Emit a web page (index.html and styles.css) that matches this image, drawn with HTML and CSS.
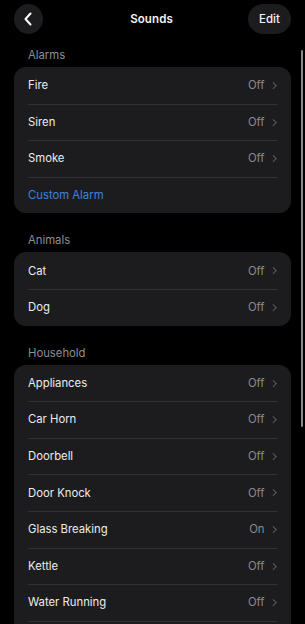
FILE: index.html
```html
<!DOCTYPE html>
<html>
<head>
<meta charset="utf-8">
<link rel="stylesheet" href="styles.css">
</head>
<body>
<div class="screen">
  <header class="nav">
    <button class="circle-btn" aria-label="Back">
      <svg width="10" height="14" viewBox="0 0 10 14"><path d="M7.5 1.5 L2.5 7 L7.5 12.5" fill="none" stroke="#fff" stroke-width="2" stroke-linecap="round" stroke-linejoin="round"/></svg>
    </button>
    <div class="title">Sounds</div>
    <button class="pill-btn">Edit</button>
  </header>

  <section class="group first">
    <div class="group-title">Alarms</div>
    <div class="card">
      <div class="row"><span class="label">Fire</span><span class="value">Off</span><span class="chev"></span></div>
      <div class="row"><span class="label">Siren</span><span class="value">Off</span><span class="chev"></span></div>
      <div class="row"><span class="label">Smoke</span><span class="value">Off</span><span class="chev"></span></div>
      <div class="row"><span class="label link">Custom Alarm</span></div>
    </div>
  </section>

  <section class="group">
    <div class="group-title">Animals</div>
    <div class="card">
      <div class="row"><span class="label">Cat</span><span class="value">Off</span><span class="chev"></span></div>
      <div class="row"><span class="label">Dog</span><span class="value">Off</span><span class="chev"></span></div>
    </div>
  </section>

  <section class="group">
    <div class="group-title">Household</div>
    <div class="card">
      <div class="row"><span class="label">Appliances</span><span class="value">Off</span><span class="chev"></span></div>
      <div class="row"><span class="label">Car Horn</span><span class="value">Off</span><span class="chev"></span></div>
      <div class="row"><span class="label">Doorbell</span><span class="value">Off</span><span class="chev"></span></div>
      <div class="row"><span class="label">Door Knock</span><span class="value">Off</span><span class="chev"></span></div>
      <div class="row"><span class="label">Glass Breaking</span><span class="value">On</span><span class="chev"></span></div>
      <div class="row"><span class="label">Kettle</span><span class="value">Off</span><span class="chev"></span></div>
      <div class="row"><span class="label">Water Running</span><span class="value">Off</span><span class="chev"></span></div>
      <div class="row"></div>
    </div>
  </section>

  <div class="scrollbar"></div>
</div>
</body>
</html>
```
FILE: styles.css
```css
* { box-sizing: border-box; }
html, body { margin: 0; padding: 0; background: #000; }
body {
  font-family: Inter, "Liberation Sans", sans-serif;
  color: #ececec;
  width: 305px;
  height: 624px;
  overflow: hidden;
}
.screen {
  position: relative;
  height: 624px;
  overflow: hidden;
  padding: 4px 14px 0 14px;
}
.nav {
  display: flex;
  align-items: center;
  justify-content: space-between;
  height: 30px;
}
.circle-btn {
  width: 29px;
  height: 30px;
  border-radius: 50%;
  border: none;
  background: #1c1c1e;
  display: flex;
  align-items: center;
  justify-content: center;
  padding: 0 2px 0 0;
}
.title {
  font-size: 11.5px;
  font-weight: 600;
  color: #f2f2f2;
  letter-spacing: 0.1px;
  margin-left: 12px;
}
.pill-btn {
  width: 43px;
  height: 30px;
  border-radius: 15px;
  border: none;
  background: #1c1c1e;
  color: #f2f2f2;
  font-family: inherit;
  font-size: 11.5px;
  font-weight: 500;
  padding: 0;
}
.group { margin-top: 19px; }
.group.first { margin-top: 13px; }
.group-title {
  height: 20px;
  line-height: 16px;
  padding-left: 14px;
  font-size: 11.3px;
  font-weight: 400;
  color: #8e8e93;
}
.card {
  background: #1c1c1e;
  border-radius: 12px;
  overflow: hidden;
}
.row {
  position: relative;
  display: flex;
  align-items: center;
  height: 36.6px;
  padding: 0 14px;
  font-size: 11.3px;
}
.row + .row::before {
  content: "";
  position: absolute;
  top: 0;
  left: 14px;
  right: 14px;
  height: 1px;
  background: #323234;
}
.label { flex: 1; color: #ececec; }
.label.link { color: #3d82e0; }
.value { color: #8a8a8e; margin-right: 6px; }
.chev {
  width: 4.5px;
  height: 4.5px;
  border-top: 1.4px solid #5e5e62;
  border-right: 1.4px solid #5e5e62;
  transform: rotate(45deg);
  margin-right: 2px;
}
.scrollbar {
  position: absolute;
  left: 301px;
  top: 50px;
  width: 2px;
  height: 377px;
  border-radius: 1px;
  background: #8a8a8c;
}
```
